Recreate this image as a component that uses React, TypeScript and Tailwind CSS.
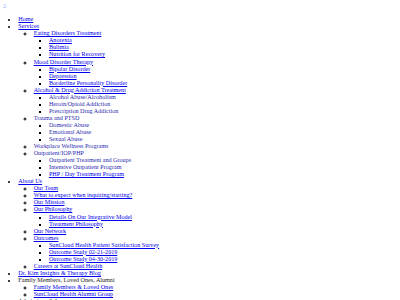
import React from 'react';

type Item = { label: string; link?: boolean; plain?: boolean; children?: Item[] };

const menu: Item[] = [
  { label: 'Home', link: true },
  {
    label: 'Services',
    link: true,
    children: [
      {
        label: 'Eating Disorders Treatment',
        link: true,
        children: [
          { label: 'Anorexia', link: true },
          { label: 'Bulimia', link: true },
          { label: 'Nutrition for Recovery', link: true },
        ],
      },
      {
        label: 'Mood Disorder Therapy',
        link: true,
        children: [
          { label: 'Bipolar Disorder', link: true },
          { label: 'Depression', link: true },
          { label: 'Borderline Personality Disorder', link: true },
        ],
      },
      {
        label: 'Alcohol & Drug Addiction Treatment',
        link: true,
        children: [
          { label: 'Alcohol Abuse/Alcoholism' },
          { label: 'Heroin/Opioid Addiction' },
          { label: 'Prescription Drug Addiction' },
        ],
      },
      {
        label: 'Trauma and PTSD',
        children: [
          { label: 'Domestic Abuse' },
          { label: 'Emotional Abuse' },
          { label: 'Sexual Abuse' },
        ],
      },
      { label: 'Workplace Wellness Programs' },
      {
        label: 'Outpatient/IOP/PHP',
        children: [
          { label: 'Outpatient Treatment and Groups' },
          { label: 'Intensive Outpatient Program' },
          { label: 'PHP / Day Treatment Program', link: true },
        ],
      },
    ],
  },
  {
    label: 'About Us',
    link: true,
    children: [
      { label: 'Our Team', link: true },
      { label: 'What to expect when inquiring/starting?', link: true },
      { label: 'Our Mission', link: true },
      {
        label: 'Our Philosophy',
        link: true,
        children: [
          { label: 'Details On Our Integrative Model', link: true },
          { label: 'Treatment Philosophy', link: true },
        ],
      },
      { label: 'Our Network', link: true },
      {
        label: 'Outcomes',
        link: true,
        children: [
          { label: 'SunCloud Health Patient Satisfaction Survey', link: true },
          { label: 'Outcome Study 02-21-2019', link: true },
          { label: 'Outcome Study 04-30-2019', link: true },
        ],
      },
      { label: 'Careers at SunCloud Health', link: true },
    ],
  },
  { label: 'Dr. Kim Insights & Therapy Blog', link: true },
  {
    label: 'Family Members, Loved Ones, Alumni',
    plain: true,
    children: [
      { label: 'Family Members & Loved Ones', link: true },
      { label: 'SunCloud Health Alumni Group', link: true },
    ],
  },
  { label: 'Admissions & Insurance', plain: true },
];

const listStyles = ['list-disc', 'list-[circle]', 'list-[square]'];

function Menu({ items, depth }: { items: Item[]; depth: number }) {
  return (
    <ul className={`${listStyles[Math.min(depth, 2)]} pl-[15.3px]`}>
      {items.map((item) => (
        <li key={item.label}>
          <a
            href="#"
            className={
              item.link
                ? 'text-[#0000ee] underline'
                : item.plain
                ? 'text-[#222222]'
                : 'text-[#2a2ab0]'
            }
          >
            {item.label}
          </a>
          {item.children && <Menu items={item.children} depth={depth + 1} />}
        </li>
      ))}
    </ul>
  );
}

export default function App() {
  return (
    <div className="min-h-[300px] bg-white p-[3.06px] font-['Liberation_Serif',serif] text-[6.13px] leading-[7.05px] text-black">
      <div className="text-[#9aa4ff]">2</div>
      <nav className="mt-[6.13px]">
        <Menu items={menu} depth={0} />
      </nav>
    </div>
  );
}
